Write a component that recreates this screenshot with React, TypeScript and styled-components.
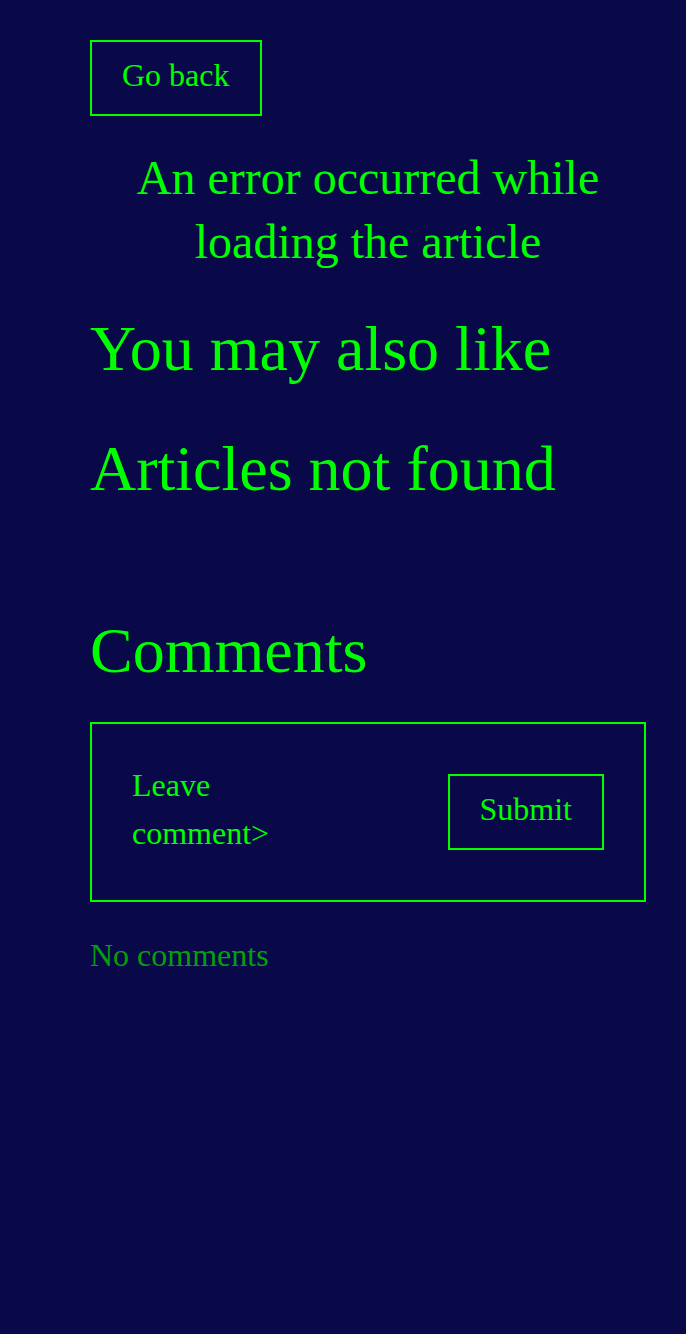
import styled, { createGlobalStyle } from "styled-components";

const GlobalStyle = createGlobalStyle`
  html, body {
    margin: 0;
    padding: 0;
    background-color: #090848;
  }
  body {
    font-family: "Liberation Serif", "Times New Roman", serif;
    color: #00ff00;
  }
`;

const Page = styled.main`
  min-height: 1334px;
  box-sizing: border-box;
  padding: 40px 40px 40px 90px;
  display: flex;
  flex-direction: column;
  align-items: flex-start;
`;

const OutlineButton = styled.button`
  background: transparent;
  border: 2px solid #00ff00;
  color: #00ff00;
  font-family: inherit;
  font-size: 32px;
  line-height: 36px;
  padding: 15px 30px 21px;
  margin: 0;
  cursor: pointer;
  flex-shrink: 0;
`;

const ErrorText = styled.p`
  align-self: stretch;
  margin: 30px 0 0;
  font-size: 48px;
  line-height: 64px;
  text-align: center;
`;

const Heading = styled.h2<{ $gap: number }>`
  margin: ${(p) => p.$gap}px 0 0;
  font-size: 64px;
  line-height: 74px;
  font-weight: normal;
`;

const CommentForm = styled.form`
  align-self: stretch;
  margin-top: 34px;
  border: 2px solid #00ff00;
  padding: 37px 40px;
  display: flex;
  align-items: center;
  justify-content: space-between;
`;

const CommentPrompt = styled.div`
  max-width: 200px;
  font-size: 32px;
  line-height: 48px;
  padding-bottom: 6px;
`;

const NoComments = styled.p`
  margin: 35px 0 0;
  font-size: 32px;
  line-height: 37px;
  color: #03a00e;
`;

export default function App() {
  return (
    <>
      <GlobalStyle />
      <Page>
        <OutlineButton type="button">Go back</OutlineButton>
        <ErrorText>An error occurred while loading the article</ErrorText>
        <Heading $gap={38}>You may also like</Heading>
        <Heading $gap={46}>Articles not found</Heading>
        <Heading $gap={108}>Comments</Heading>
        <CommentForm onSubmit={(e) => e.preventDefault()}>
          <CommentPrompt>Leave comment&gt;</CommentPrompt>
          <OutlineButton type="submit">Submit</OutlineButton>
        </CommentForm>
        <NoComments>No comments</NoComments>
      </Page>
    </>
  );
}
